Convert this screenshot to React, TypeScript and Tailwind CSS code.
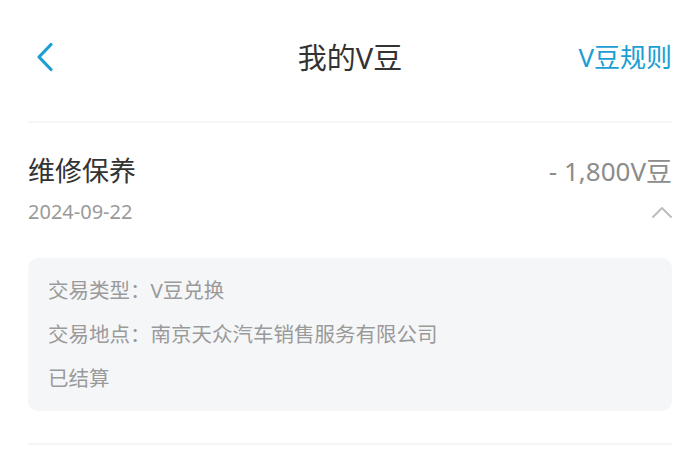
const details = [
  "交易类型：V豆兑换",
  "交易地点：南京天众汽车销售服务有限公司",
  "已结算",
];

export default function App() {
  return (
    <div
      className="w-[700px] h-[466px] bg-white px-[28px] overflow-hidden"
      style={{ fontFamily: '"Noto Sans", "Noto Sans CJK SC", sans-serif' }}
    >
      {/* Header */}
      <div className="grid grid-cols-[1fr_auto_1fr] items-center h-[114px]">
        <div className="pl-[8px]">
          <svg width="18" height="30" viewBox="0 0 18 30" fill="none">
            <path
              d="M15 2.5 L3 15 L15 27.5"
              stroke="#1a9ed3"
              strokeWidth="3.2"
              strokeLinecap="round"
              strokeLinejoin="round"
            />
          </svg>
        </div>
        <h1 className="text-[29px] leading-none text-[#333333]">我的V豆</h1>
        <div className="text-right text-[26px] leading-none text-[#1a9ed3]">V豆规则</div>
      </div>
      <div className="mt-[7px] h-[2px] bg-[#f5f5f5]" />

      {/* Record */}
      <div className="pt-[30px]">
        <div className="flex items-center justify-between h-[36px]">
          <span className="text-[27px] text-[#333333]">维修保养</span>
          <span className="text-[26px] text-[#8c8c8c]">- 1,800V豆</span>
        </div>
        <div className="mt-[11px] flex items-center justify-between h-[24px]">
          <span className="text-[20px] text-[#9a9a9a]">2024-09-22</span>
          <svg width="22" height="14" viewBox="0 0 22 14" fill="none" className="mr-[-1px]">
            <path
              d="M2 12 L11 3 L20 12"
              stroke="#bdbdbd"
              strokeWidth="2"
              strokeLinecap="round"
              strokeLinejoin="round"
            />
          </svg>
        </div>

        <div className="mt-[34px] rounded-[10px] bg-[#f5f6f8] px-[20px] pt-[10px] pb-[11px]">
          {details.map((line) => (
            <div key={line} className="h-[44px] flex items-center text-[20.5px] text-[#9a9a9a]">
              {line}
            </div>
          ))}
        </div>
      </div>
      <div className="mt-[32px] h-[2px] bg-[#f5f5f5]" />
    </div>
  );
}
